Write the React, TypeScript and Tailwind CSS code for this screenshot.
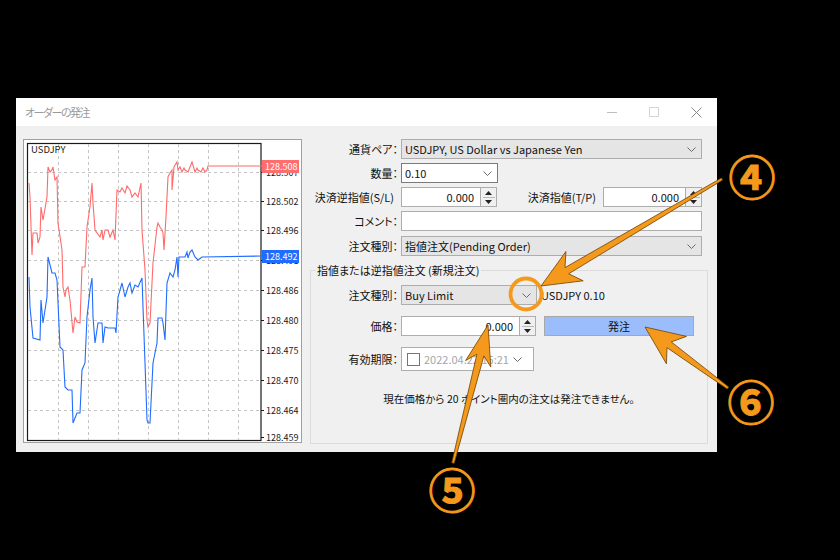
import React from 'react';

const RED = '29,183 30,197 32,255 33,233 37,233 38,243 40,237 41,207 43,220 47,197 48,167 50,172 52,170 53,167 55,180 57,177 58,223 62,250 63,287 65,297 66,290 68,287 70,300 73,333 75,317 77,322 80,323 82,267 85,267 87,227 90,207 92,183 93,203 95,230 100,237 102,230 103,240 105,230 108,230 110,237 113,230 115,240 117,190 120,192 122,188 125,193 127,186 130,190 132,197 135,193 138,197 141,183 142,230 145,270 147,320 148,327 150,323 152,283 153,263 157,227 158,223 160,227 162,230 163,233 164,250 166,217 168,177 170,173 172,170 172,190 174,167 177,162 178,170 180,167 182,172 184,168 185,170 188,172 190,167 192,162 195,172 197,168 198,170 201,172 203,168 205,172 207,170 208,166 262,166';
const BLUE = '29,277 30,307 33,338 40,340 41,300 43,323 47,297 48,257 52,273 55,273 57,280 60,347 63,350 65,387 68,390 72,390 73,423 77,413 80,413 82,370 85,363 87,317 90,290 92,278 93,317 95,343 98,323 102,323 103,343 105,327 108,328 115,328 116,333 118,297 122,283 125,297 128,287 130,283 132,293 135,285 138,287 142,278 143,307 145,363 147,420 148,423 150,423 152,383 153,363 157,343 158,318 162,318 163,323 165,340 167,283 170,273 173,277 175,270 177,257 178,277 179,257 185,257 187,252 188,258 190,252 192,250 195,257 198,260 202,257 262,256';

const V_GRID = [58, 88, 118, 148, 178, 208, 238];
const H_GRID = [172, 201, 230, 260, 290, 320, 350, 380, 410];
const AXIS = [
  ['128.507', 172],
  ['128.502', 201],
  ['128.496', 230],
  ['128.491', 260],
  ['128.486', 290],
  ['128.480', 320],
  ['128.475', 350],
  ['128.470', 380],
  ['128.464', 410],
  ['128.459', 437],
] as const;

const Chevron = () => (
  <svg width="9" height="5" viewBox="0 0 9 5">
    <path d="M0.5 0.5 L4.5 4.5 L8.5 0.5" fill="none" stroke="#6a6a6a" strokeWidth="1" />
  </svg>
);

const Spinner = () => (
  <div className="w-[16px] h-full border border-l-0 border-[#adadad] bg-[#f0f0f0] flex flex-col items-center justify-center gap-[2px]">
    <svg width="7" height="4" viewBox="0 0 7 4">
      <path d="M0 4 L3.5 0 L7 4Z" fill="#222" />
    </svg>
    <div className="h-px w-[12px] bg-[#b8b8b8]" />
    <svg width="7" height="4" viewBox="0 0 7 4">
      <path d="M0 0 L3.5 4 L7 0Z" fill="#222" />
    </svg>
  </div>
);

const SpinInput = ({ value, boxW }: { value: string; boxW: string }) => (
  <div className="flex h-[20px]">
    <div className={`${boxW} h-full bg-white border border-[#adadad] flex items-center justify-end pr-[6px]`}>{value}</div>
    <Spinner />
  </div>
);

const Select = ({ value, w, white }: { value: string; w: string; white?: boolean }) => (
  <div
    className={`${w} h-[20px] flex items-center justify-between pl-[3px] pr-[5px] border ${
      white ? 'bg-white border-[#7a7a7a]' : 'bg-[#e5e5e5] border-[#adadad]'
    }`}
  >
    <span>{value}</span>
    <Chevron />
  </div>
);

const Label = ({ children, w = 'w-[88px]', extra = '' }: { children: React.ReactNode; w?: string; extra?: string }) => (
  <div className={`${w} shrink-0 text-right mr-[3px] ${extra}`}>{children}</div>
);

const Chart = () => (
  <div className="w-[279px] h-[304px] border border-[#a0a0a0] bg-white">
    <svg width="277" height="302" viewBox="24 140 277 302" className="block">
      <rect x="27.5" y="143.5" width="233.5" height="297" fill="#fff" stroke="#1a1a1a" strokeWidth="1.2" />
      {V_GRID.map((x) => (
        <line key={x} x1={x + 0.5} y1="144" x2={x + 0.5} y2="440" stroke="#c4c4c4" strokeDasharray="3 3" />
      ))}
      {H_GRID.map((y) => (
        <line key={y} x1="28" y1={y + 0.5} x2="260" y2={y + 0.5} stroke="#c4c4c4" strokeDasharray="3 3" />
      ))}
      <polyline points={RED} fill="none" stroke="#ff6b6b" strokeWidth="1.1" />
      <polyline points={BLUE} fill="none" stroke="#1f6cff" strokeWidth="1.1" />
      <text x="31" y="153" fontSize="9.5" fill="#1a1a1a" fontFamily="Noto Sans CJK JP, sans-serif">USDJPY</text>
      {AXIS.map(([v, y]) => (
        <g key={v}>
          <line x1="261" y1={y + 0.5} x2="264" y2={y + 0.5} stroke="#1a1a1a" />
          <text x="266" y={y + 3.5} fontSize="9" fill="#1a1a1a" fontFamily="Noto Sans CJK JP, sans-serif">{v}</text>
        </g>
      ))}
      <rect x="262" y="160" width="37" height="13" fill="#ff6e6e" />
      <text x="265" y="170" fontSize="9" fill="#fff" fontFamily="Noto Sans CJK JP, sans-serif">128.508</text>
      <rect x="262" y="250" width="37" height="13" fill="#1f6cff" />
      <text x="265" y="260" fontSize="9" fill="#fff" fontFamily="Noto Sans CJK JP, sans-serif">128.492</text>
    </svg>
  </div>
);

const OrderForm = () => (
  <div className="ml-[8px] mt-[13px] w-[398px] flex flex-col">
    <div className="flex flex-col gap-[4px]">
      <div className="flex items-center">
        <Label>通貨ペア：</Label>
        <Select value="USDJPY, US Dollar vs Japanese Yen" w="w-[301px]" />
      </div>
      <div className="flex items-center">
        <Label>数量：</Label>
        <Select value="0.10" w="w-[97px]" white />
      </div>
      <div className="flex items-center">
        <Label extra="pr-[4px]">決済逆指値(S/L)</Label>
        <SpinInput value="0.000" boxW="w-[80px]" />
        <div className="w-[106px] text-right pr-[7px]">決済指値(T/P)</div>
        <SpinInput value="0.000" boxW="w-[83px]" />
      </div>
      <div className="flex items-center">
        <Label>コメント：</Label>
        <div className="w-[301px] h-[20px] bg-white border border-[#adadad]" />
      </div>
      <div className="flex items-center mt-[1px]">
        <Label>注文種別：</Label>
        <Select value="指値注文(Pending Order)" w="w-[301px]" />
      </div>
    </div>

    <fieldset className="mt-[7px] h-[181px] border border-[#dcdcdc] flex flex-col">
      <legend className="ml-[5px] px-[1px] leading-[14px]">指値または逆指値注文 (新規注文)</legend>
      <div className="flex items-center mt-[8px]">
        <Label w="w-[87px]">注文種別：</Label>
        <Select value="Buy Limit" w="w-[136px]" />
        <span className="ml-[4px]">USDJPY 0.10</span>
      </div>
      <div className="flex items-center mt-[11px]">
        <Label w="w-[87px]">価格：</Label>
        <SpinInput value="0.000" boxW="w-[119px]" />
        <div className="ml-[8px] w-[150px] h-[20px] bg-[#9cbdfb] border border-[#a8a8a8] flex items-center justify-center">
          発注
        </div>
      </div>
      <div className="flex items-center mt-[11px]">
        <Label w="w-[87px]">有効期限：</Label>
        <div className="w-[133px] h-[24px] bg-white border border-[#adadad] flex items-center pl-[5px] pr-[11px]">
          <div className="w-[13px] h-[13px] border border-[#3d7fd0] bg-white" />
          <span className="ml-[4px] text-[#a6a6a6]">2022.04.22 15:21</span>
          <div className="ml-auto">
            <Chevron />
          </div>
        </div>
      </div>
      <div className="mt-[20px] text-center text-[10.5px]">現在価格から 20 ポイント圏内の注文は発注できません。</div>
    </fieldset>
  </div>
);

const arrowPoints = (tx: number, ty: number, px: number, py: number, head: number, half: number) => {
  const dx = px - tx;
  const dy = py - ty;
  const len = Math.hypot(dx, dy);
  const ux = dx / len;
  const uy = dy / len;
  const nx = -uy;
  const ny = ux;
  const neckX = px - ux * (head - 9);
  const neckY = py - uy * (head - 9);
  const barbX = px - ux * head;
  const barbY = py - uy * head;
  const tail = 1.2;
  const neck = 3.6;
  const pts = [
    [tx + nx * tail, ty + ny * tail],
    [neckX + nx * neck, neckY + ny * neck],
    [barbX + nx * half, barbY + ny * half],
    [px, py],
    [barbX - nx * half, barbY - ny * half],
    [neckX - nx * neck, neckY - ny * neck],
    [tx - nx * tail, ty - ny * tail],
  ];
  return pts.map((p) => p.map((n) => n.toFixed(1)).join(',')).join(' ');
};

const ORANGE = '#f5991c';

const Annotations = () => (
  <div className="absolute inset-0 pointer-events-none">
    <svg width="840" height="560" className="absolute inset-0">
      <circle cx="526" cy="294" r="15.5" fill="none" stroke={ORANGE} strokeWidth="3.8" />
      <polygon points={arrowPoints(722, 179, 541, 286, 39, 17)} fill={ORANGE} stroke="#6b4300" strokeWidth="0.8" />
      <polygon points={arrowPoints(453, 463, 488, 325, 40, 13)} fill={ORANGE} stroke="#6b4300" strokeWidth="0.8" />
      <polygon points={arrowPoints(728, 388, 645, 327, 39, 17)} fill={ORANGE} stroke="#6b4300" strokeWidth="0.8" />
    </svg>
    <div className="absolute left-[728px] top-[149px] w-[48px] text-center text-[47px] leading-[52px] font-bold text-[#f5991c] [-webkit-text-stroke:0.9px_#f5991c]">④</div>
    <div className="absolute left-[428px] top-[462px] w-[48px] text-center text-[47px] leading-[52px] font-bold text-[#f5991c] [-webkit-text-stroke:0.9px_#f5991c]">⑤</div>
    <div className="absolute left-[727px] top-[374px] w-[48px] text-center text-[47px] leading-[52px] font-bold text-[#f5991c] [-webkit-text-stroke:0.9px_#f5991c]">⑥</div>
  </div>
);

export default function App() {
  return (
    <div className="relative w-[840px] h-[560px] bg-black overflow-hidden font-['Noto_Sans_CJK_JP',sans-serif] [font-feature-settings:'palt']">
      <div className="pt-[98px] pl-[16px]">
        <div className="w-[701px] h-[354px] flex flex-col bg-[#f0f0f0] text-[11px] text-[#111]">
          {/* title bar */}
          <div className="h-[28px] bg-white flex items-center">
            <span className="pl-[9px] text-[11px] text-[#9a9a9a] tracking-[-1.5px]">オーダーの発注</span>
            <div className="ml-auto flex h-full">
              <div className="w-[42px] flex items-center justify-center">
                <div className="w-[10px] h-px bg-[#bdbdbd]" />
              </div>
              <div className="w-[42px] flex items-center justify-center">
                <div className="w-[10px] h-[10px] border border-[#d4d4d4]" />
              </div>
              <div className="w-[42px] flex items-center justify-center">
                <svg width="11" height="11" viewBox="0 0 11 11">
                  <path d="M0.5 0.5 L10.5 10.5 M10.5 0.5 L0.5 10.5" stroke="#8a8a8a" strokeWidth="1" />
                </svg>
              </div>
            </div>
          </div>
          {/* body */}
          <div className="flex pl-[7px]">
            <div className="mt-[13px]">
              <Chart />
            </div>
            <OrderForm />
          </div>
        </div>
      </div>
      <Annotations />
    </div>
  );
}
